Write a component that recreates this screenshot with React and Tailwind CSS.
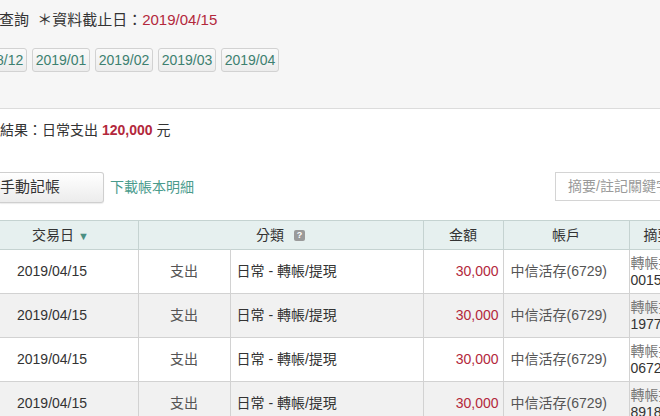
const font = { fontFamily: '"Liberation Sans", "Noto Sans CJK TC", sans-serif' };

const months = ["2018/12", "2019/01", "2019/02", "2019/03", "2019/04"];

const rows = [
  { memo: "0015", gray: false },
  { memo: "1977", gray: true },
  { memo: "0672", gray: false },
  { memo: "8918", gray: true },
];

function App() {
  return (
    <div className="w-[660px] h-[416px] overflow-hidden bg-white text-[#333]" style={font}>
      {/* 上方查詢區 */}
      <div className="h-[109px] bg-[#f6f6f6] border-b border-[#dcdcdc]">
        <div className="pt-[10px] h-[30px] text-[15px] leading-[20px] whitespace-nowrap -ml-[1px]">
          查詢 <span className="ml-[4px]">＊資料截止日：</span>
          <span className="text-[#b3283c]">2019/04/15</span>
        </div>
        <div className="flex gap-[5px] mt-[18px] -ml-[31px]">
          {months.map((m) => (
            <div
              key={m}
              className="w-[58px] h-[24px] flex items-center justify-center rounded-[3px] border border-[#d2d2d2] bg-gradient-to-b from-[#fafafa] to-[#ececec] text-[14px] text-[#3d8070]"
            >
              {m}
            </div>
          ))}
        </div>
      </div>

      {/* 結果 */}
      <div className="pt-[11px] h-[41px] text-[14px] leading-[20px] whitespace-nowrap">
        結果：日常支出 <span className="font-bold text-[#b3283c]">120,000</span> 元
      </div>

      {/* 按鈕列 */}
      <div className="flex items-start h-[70px] pt-[22px]">
        <div className="w-[104px] h-[31px] flex items-center rounded-r-[3px] border border-l-0 border-[#cfcfcf] bg-gradient-to-b from-white to-[#ececec] text-[15px] shadow-[0_1px_1px_rgba(0,0,0,0.08)]">
          手動記帳
        </div>
        <div className="ml-[6px] h-[31px] flex items-center text-[14px] text-[#4a9b8c]">下載帳本明細</div>
        <div className="ml-auto mr-[-20px] w-[125px] h-[29px] border border-[#d4d4d4] bg-white flex items-center pl-[12px] text-[14px] text-[#9a9a9a] whitespace-nowrap overflow-hidden">
          摘要/註記關鍵字
        </div>
      </div>

      {/* 表格 */}
      <table className="table-fixed border-collapse text-[14px] w-[700px]">
        <colgroup>
          <col className="w-[138px]" />
          <col className="w-[92px]" />
          <col className="w-[193px]" />
          <col className="w-[80px]" />
          <col className="w-[126px]" />
          <col className="w-[71px]" />
        </colgroup>
        <thead>
          <tr className="h-[29px] bg-[#e6f0ef] border-t border-b border-[#c5d3d1]">
            <th className="font-normal border-r border-[#c5d3d1] text-left pl-[32px]">
              交易日 <span className="text-[#4b8f83] text-[11px]">▼</span>
            </th>
            <th colSpan={2} className="font-normal border-r border-[#c5d3d1]">
              <span className="inline-flex items-center gap-[10px]">
                分類
                <span className="w-[11px] h-[11px] bg-[#9a9a9a] rounded-[2px] text-white text-[9px] leading-[11px] font-bold flex items-center justify-center">?</span>
              </span>
            </th>
            <th className="font-normal border-r border-[#c5d3d1]">金額</th>
            <th className="font-normal border-r border-[#c5d3d1]">帳戶</th>
            <th className="font-normal text-left pl-[14px]">摘要</th>
          </tr>
        </thead>
        <tbody>
          {rows.map((r, i) => (
            <tr key={i} className={`h-[44px] border-b border-[#d2d2d2] ${r.gray ? "bg-[#f1f1f1]" : "bg-white"}`}>
              <td className="border-r border-[#d2d2d2] pl-[17px]">2019/04/15</td>
              <td className="border-r border-[#d2d2d2] text-center text-[#555]">支出</td>
              <td className="border-r border-[#d2d2d2] pl-[6px]">日常 - 轉帳/提現</td>
              <td className="border-r border-[#d2d2d2] text-right pr-[4px] text-[#b3283c]">30,000</td>
              <td className="border-r border-[#d2d2d2] pl-[7px] text-[#555]">中信活存(6729)</td>
              <td className="pl-[1px] text-[14px] leading-[17px] whitespace-nowrap">
                <div className="text-[#777]">轉帳提款</div>
                <div>{r.memo}</div>
              </td>
            </tr>
          ))}
        </tbody>
      </table>
    </div>
  );
}

export default App;
